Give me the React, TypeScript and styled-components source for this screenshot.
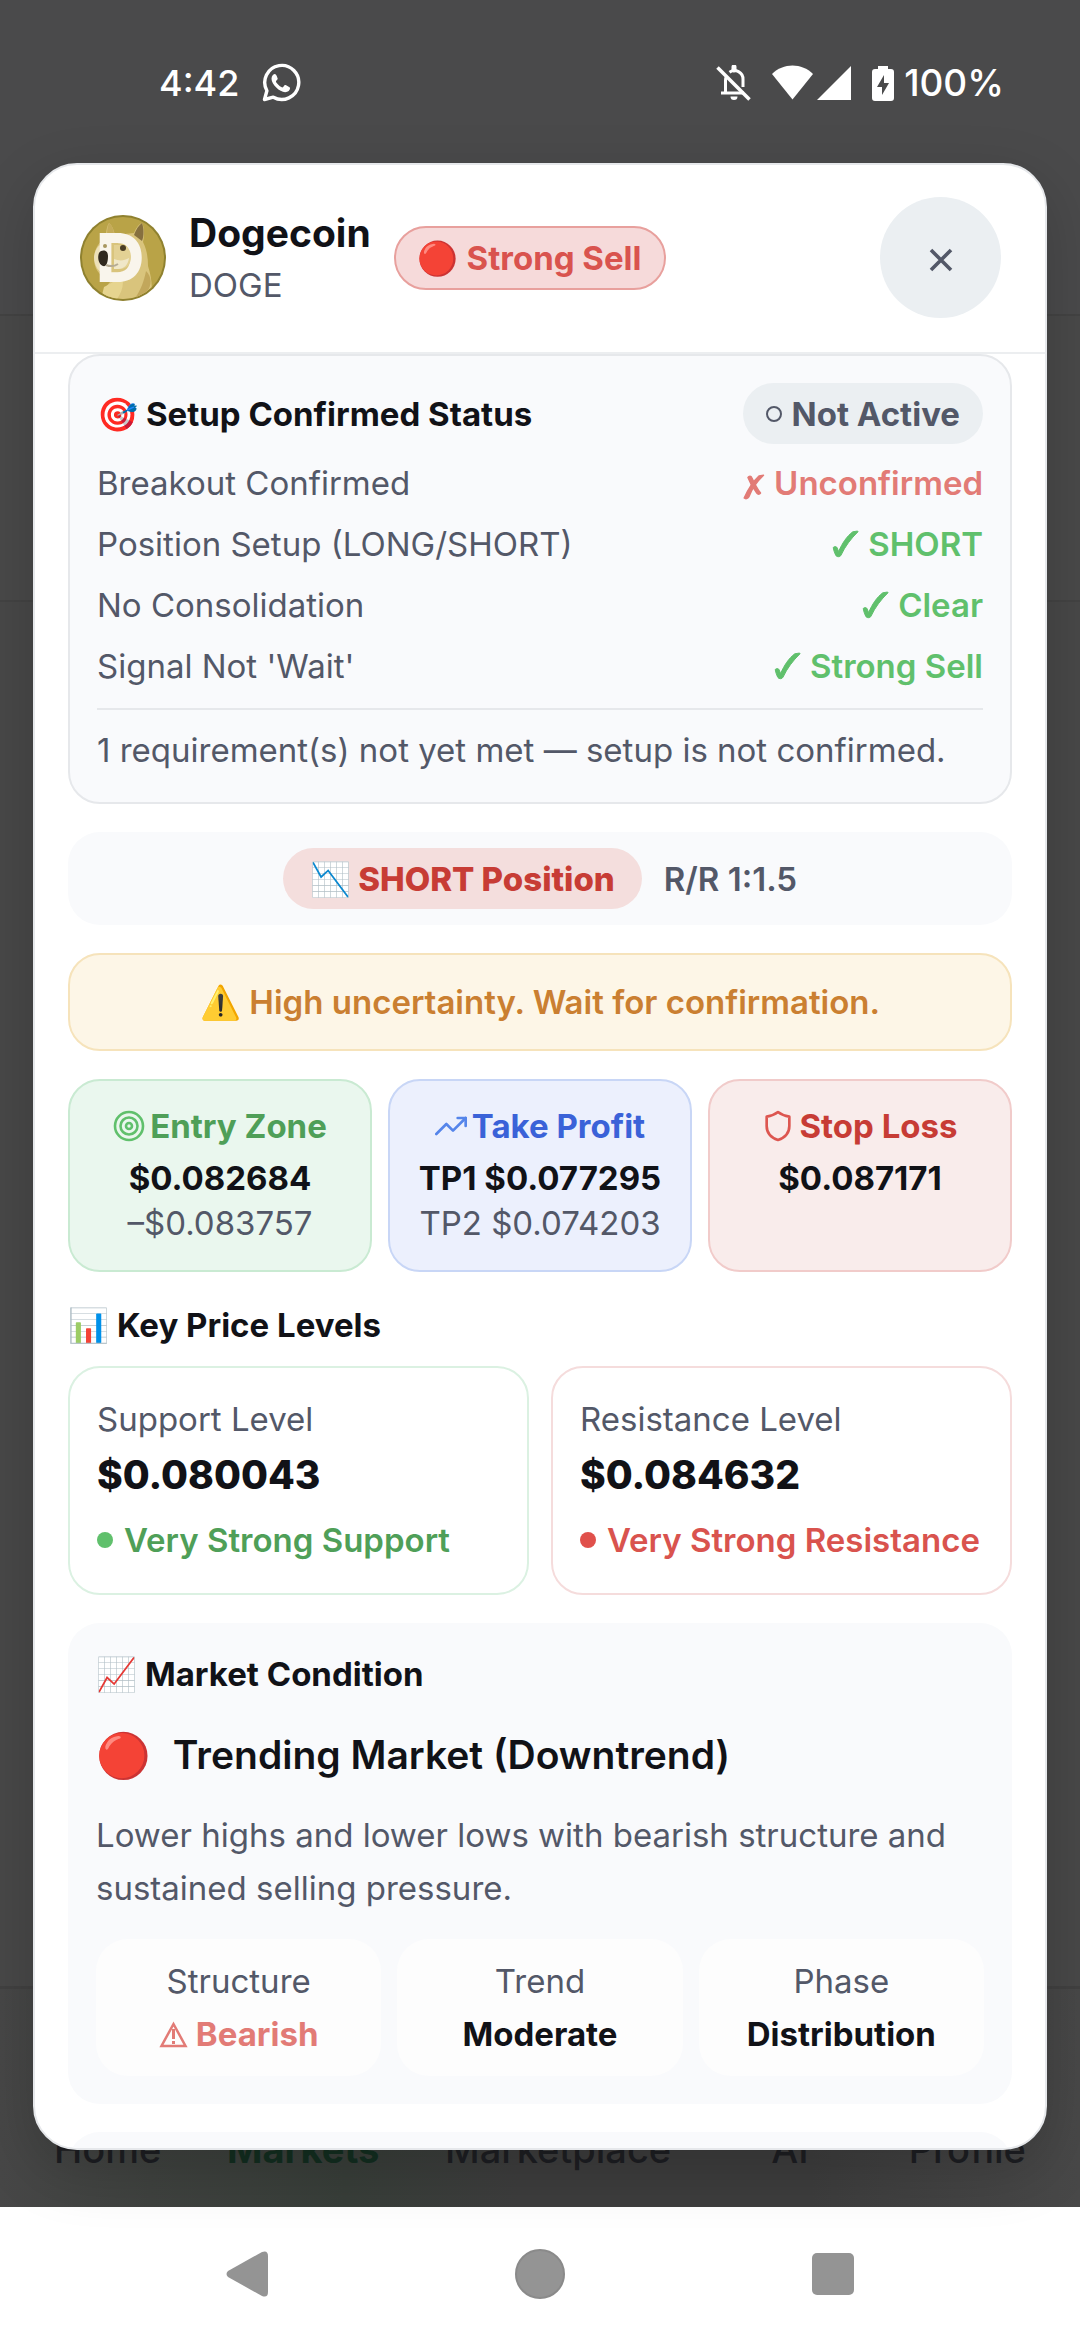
import React from 'react';
import styled, { createGlobalStyle } from 'styled-components';

const color = {
  ink: '#111217',
  body: '#535868',
  line: '#e6e8eb',
  panel: '#f9fafc',
  chip: '#ebeff2',
  green: '#4f9f58',
  greenBright: '#60c06c',
  red: '#c73c35',
  redMid: '#d9534e',
  redSoft: '#e27b76',
  blue: '#3a62d8',
  amber: '#ca7f31',
};

const GlobalStyle = createGlobalStyle`
  *, *::before, *::after { box-sizing: border-box; }
  body {
    margin: 0;
    font-family: Inter, "Noto Color Emoji", Roboto, sans-serif;
    font-size: 33px;
    line-height: 50px;
    color: ${color.ink};
    background: #494949;
  }
  h1, h2, h3, p, ul, dl, dd, dt { margin: 0; padding: 0; font-weight: inherit; font-size: inherit; }
  button { font: inherit; border: 0; padding: 0; background: none; cursor: pointer; }
`;

const Screen = styled.div`
  display: flex;
  flex-direction: column;
  height: 100vh;
`;

const AppArea = styled.div`
  position: relative;
  flex: 1;
  min-height: 0;
  display: flex;
  flex-direction: column;
  background: linear-gradient(#4a4a4b 0 314px, #434343 314px 316px, #494949 316px 600px, #434343 600px 602px, #484848 602px);
`;

const StatusBar = styled.div`
  display: flex;
  align-items: center;
  justify-content: space-between;
  height: 163px;
  padding: 3px 76px 0 159px;
  color: #fff;
  font-size: 36px;
  font-weight: 500;
`;

const StatusGroup = styled.div<{ $gap: number }>`
  display: flex;
  align-items: center;
  gap: ${(p) => p.$gap}px;
  svg { display: block; }
`;

const BatteryLevel = styled.span`
  font-size: 37px;
`;

const TabBar = styled.nav`
  position: absolute;
  left: 0;
  right: 0;
  bottom: 0;
  height: 221px;
  padding: 0 54px 33px;
  display: flex;
  align-items: flex-end;
  justify-content: space-between;
  border-top: 3px solid #414141;
  background: linear-gradient(90deg, #474747 0%, #3f423f 14%, #383e39 32%, #3d3d3d 48%, #3d3d3d 75%, #484848 100%);
`;

const Tab = styled.a<{ $active?: boolean }>`
  min-width: 106px;
  text-align: center;
  text-decoration: none;
  font-size: 38px;
  line-height: 50px;
  font-weight: ${(p) => (p.$active ? 700 : 500)};
  color: ${(p) => (p.$active ? '#132e20' : '#1d1e22')};
`;

const DialogHolder = styled.div`
  position: relative;
  flex: 1;
  min-height: 0;
  display: flex;
  padding: 0 33px 57px;
`;

const Dialog = styled.section`
  flex: 1;
  min-width: 0;
  display: flex;
  flex-direction: column;
  overflow: hidden;
  border: 2px solid ${color.line};
  border-radius: 44px;
  background: #fff;
  box-shadow: 0 20px 60px rgba(0, 0, 0, 0.18);
`;

const DialogHeader = styled.header`
  display: flex;
  align-items: center;
  gap: 23px;
  padding: 32px 44px 34px 45px;
  border-bottom: 2px solid #eceef0;
`;

const CoinName = styled.h1`
  font-size: 39px;
  line-height: 54px;
  font-weight: 700;
`;

const CoinSymbol = styled.p`
  color: ${color.body};
`;

const SignalBadge = styled.span`
  padding: 5px 22px;
  border: 2px solid #e8a09d;
  border-radius: 32px;
  background: #f6dada;
  color: ${color.redMid};
  font-weight: 700;
  white-space: nowrap;
`;

const CloseButton = styled.button`
  display: flex;
  align-items: center;
  justify-content: center;
  width: 121px;
  height: 121px;
  margin-left: auto;
  padding-top: 5px;
  border-radius: 50%;
  background: ${color.chip};
`;

const DialogBody = styled.div`
  flex: 1;
  min-height: 0;
  overflow: hidden;
  padding: 0 33px;
  display: flex;
  flex-direction: column;
  gap: 28px;
  > * { flex-shrink: 0; }
`;

const SetupCard = styled.section`
  padding: 27px;
  border: 2px solid ${color.line};
  border-radius: 32px;
  background: ${color.panel};
`;

const SetupHead = styled.div`
  display: flex;
  align-items: center;
  justify-content: space-between;
  margin-bottom: 14px;
`;

const Heading = styled.h2`
  font-weight: 700;
`;

const Pill = styled.span<{ $tone: 'neutral' | 'short' }>`
  display: inline-flex;
  align-items: center;
  gap: 10px;
  height: 61px;
  padding: 0 ${(p) => (p.$tone === 'short' ? 27 : 23)}px;
  border-radius: 31px;
  font-weight: ${(p) => (p.$tone === 'short' ? 800 : 700)};
  color: ${(p) => (p.$tone === 'short' ? color.red : color.body)};
  background: ${(p) => (p.$tone === 'short' ? '#f4dedd' : color.chip)};
`;

const Ring = styled.span`
  width: 16px;
  height: 16px;
  border: 2px solid ${color.body};
  border-radius: 50%;
`;

const CheckList = styled.dl`
  display: flex;
  flex-direction: column;
  gap: 11px;
`;

const CheckRow = styled.div`
  display: flex;
  justify-content: space-between;
`;

const CheckLabel = styled.dt`
  color: ${color.body};
`;

const CheckValue = styled.dd<{ $ok: boolean }>`
  display: flex;
  align-items: center;
  gap: 9px;
  font-weight: 600;
  color: ${(p) => (p.$ok ? color.greenBright : color.redSoft)};
`;

const SetupNote = styled.p`
  margin-top: 17px;
  padding-top: 15px;
  border-top: 2px solid ${color.line};
  color: ${color.body};
`;

const PositionBar = styled.section`
  display: flex;
  align-items: center;
  justify-content: center;
  gap: 22px;
  padding: 16px;
  border-radius: 32px;
  background: ${color.panel};
`;

const RiskReward = styled.span`
  font-weight: 600;
  color: ${color.body};
`;

const Warning = styled.p`
  padding: 22px;
  border: 2px solid #f6e3bb;
  border-radius: 32px;
  background: #fdf6e7;
  color: ${color.amber};
  font-weight: 600;
  text-align: center;
`;

const ThreeColumns = styled.div`
  display: grid;
  grid-template-columns: repeat(3, 1fr);
  gap: 16px;
`;

const TargetCard = styled.section<{ $bg: string; $edge: string }>`
  padding: 20px 8px 24px;
  border: 2px solid ${(p) => p.$edge};
  border-radius: 32px;
  background: ${(p) => p.$bg};
  text-align: center;
`;

const TargetTitle = styled.h3<{ $color: string }>`
  display: flex;
  align-items: center;
  justify-content: center;
  gap: 5px;
  margin-bottom: 5px;
  font-weight: 700;
  color: ${(p) => p.$color};
`;

const TargetLine = styled.p<{ $soft?: boolean }>`
  line-height: 45px;
  font-weight: ${(p) => (p.$soft ? 400 : 700)};
  color: ${(p) => (p.$soft ? color.body : color.ink)};
`;

const LevelsSection = styled.section`
  display: flex;
  flex-direction: column;
  gap: 16px;
`;

const LevelGrid = styled.div`
  display: grid;
  grid-template-columns: repeat(2, 1fr);
  gap: 22px;
`;

const LevelCard = styled.article<{ $edge: string }>`
  padding: 26px 27px 28px;
  border: 2px solid ${(p) => p.$edge};
  border-radius: 32px;
`;

const LevelLabel = styled.h3`
  color: ${color.body};
`;

const LevelPrice = styled.p`
  margin: 6px 0 15px;
  font-size: 39px;
  font-weight: 800;
`;

const LevelStrength = styled.p<{ $color: string; $dot: string }>`
  display: flex;
  align-items: center;
  gap: 11px;
  font-weight: 600;
  white-space: nowrap;
  color: ${(p) => p.$color};
  &::before {
    content: '';
    width: 16px;
    height: 16px;
    border-radius: 50%;
    background: ${(p) => p.$dot};
  }
`;

const MarketCard = styled.section`
  padding: 26px 28px 28px;
  border-radius: 32px;
  background: ${color.panel};
`;

const MarketState = styled.h3`
  display: flex;
  align-items: center;
  gap: 22px;
  margin: 31px 0 29px;
  font-size: 39px;
  font-weight: 600;
`;

const StateEmoji = styled.span`
  font-size: 44px;
`;

const MarketText = styled.p`
  margin-bottom: 24px;
  line-height: 53px;
  color: ${color.body};
`;

const FactTile = styled.div`
  padding: 17px;
  border-radius: 32px;
  background: #fdfdfd;
  text-align: center;
`;

const FactLabel = styled.p`
  margin-bottom: 3px;
  color: ${color.body};
`;

const FactValue = styled.p<{ $alert?: boolean }>`
  display: flex;
  align-items: center;
  justify-content: center;
  gap: 8px;
  font-weight: 700;
  color: ${(p) => (p.$alert ? color.redSoft : color.ink)};
`;

const NextCard = styled.section`
  height: 120px;
  border-radius: 32px;
  background: ${color.panel};
`;

const SystemNav = styled.nav`
  display: flex;
  justify-content: space-around;
  align-items: center;
  height: 133px;
  padding: 0 100px;
  background: #fff;
`;

const SystemButton = styled.button`
  display: flex;
  align-items: center;
  justify-content: center;
  width: 96px;
  height: 96px;
`;

const DogeLogo = () => (
  <svg width="86" height="86" viewBox="0 0 86 86" role="img" aria-label="Dogecoin logo">
    <defs>
      <clipPath id="coin"><circle cx="43" cy="43" r="41" /></clipPath>
    </defs>
    <circle cx="43" cy="43" r="43" fill="#8f812f" />
    <circle cx="43" cy="43" r="41" fill="#b9a347" />
    <g clipPath="url(#coin)">
      <path d="M29 8c3 2 5 8 6 12l19-2c2-5 5-9 8-10 3 6 2 14 1 19 4 8 5 16 5 24 4 12 5 24 2 36H22c0-9 3-15 10-22-10-2-17-8-18-20 0-10 4-17 12-24 0-5 1-10 3-13z" fill="#d9c47c" />
      <path d="M54 20c2-6 5-10 8-12 2 6 2 13 0 18z" fill="#86703f" />
      <path d="M29 8c3 2 5 7 5 12l-7 2c0-5 0-10 2-14z" fill="#c4ab59" />
      <path d="M14 42c1-9 6-14 12-14v32c-7-2-12-9-12-18z" fill="#ece0b8" />
      <path d="M24 72c8-4 14-8 18-10 3 9-2 19-8 26H20z" fill="#e6d48f" />
      <path d="M66 56c6 6 6 14 1 21l-12 6c6-8 9-17 11-27z" fill="#c2a75b" />
    </g>
    <text x="16" y="67" fontFamily="Inter, sans-serif" fontSize="67" fontWeight="800" fill="#f9f5ec">D</text>
    <path d="M34 30h6c7 0 11 5 11 12s-4 12-11 12h-6z" fill="#e3d194" />
    <path d="M34 44c5 2 10 2 15-1-1 7-5 11-11 11h-4z" fill="#f0e7c8" />
    <path d="M19 38c3-4 9-3 9 3 0 7-2 11-5 10-4-1-6-8-4-13z" fill="#30291f" />
    <path d="M26 50c5 2 9 1 12-1" stroke="#b5ab94" strokeWidth="2" fill="none" />
    <ellipse cx="43" cy="33" rx="3" ry="3" fill="#4a3d25" />
    <ellipse cx="25" cy="31" rx="2" ry="2" fill="#a8975f" />
  </svg>
);

const WhatsAppIcon = () => (
  <svg width="40" height="40" viewBox="0 0 40 40" fill="none" aria-label="WhatsApp">
    <path d="M3.500 36.500l2.400-8.800A17 17 0 1 1 12.300 34.200z" stroke="#fff" strokeWidth="3.400" strokeLinejoin="round" />
    <path d="M14 11c-1.500 0-3.500 2-3.500 4.800 0 5.700 8.200 13.400 13.600 13.400 3 0 5-2 5-4.200 0-.7-4.300-2.900-5-2.900-.8 0-1.800 2.300-2.600 2.300-1.500 0-6-3.800-6.600-6 0-.8 1.800-1.600 1.800-2.700 0-.7-1.600-4.700-2.700-4.700z" fill="#fff" />
  </svg>
);

const BellOffIcon = () => (
  <svg width="36" height="36" viewBox="0 0 36 36" fill="none" stroke="#fff" strokeWidth="3" aria-label="Notifications silenced">
    <path d="M5 28h23M9.500 28V15.500c0-1.800.5-3.500 1.300-4.800M13.500 7.300A8.500 8.500 0 0 1 27 14.500V22" />
    <path d="M18 5V2" strokeWidth="5" strokeLinecap="round" />
    <path d="M14.500 31.500h7a3.500 3.500 0 0 1-7 0z" fill="#fff" stroke="none" />
    <path d="M1.500 2.500l32 32" strokeWidth="3.500" />
  </svg>
);

const SignalIcons = () => (
  <svg width="80" height="36" viewBox="0 0 80 36" fill="#fff" aria-label="Wi-Fi and mobile signal">
    <path d="M0 9C11-2.500 30-2.500 41 9L20.500 34.500z" />
    <path d="M79 1v34H45z" />
  </svg>
);

const BatteryIcon = () => (
  <svg width="22" height="36" viewBox="0 0 22 36" aria-label="Charging">
    <path d="M6 1h10v3h3a3 3 0 0 1 3 3v26a3 3 0 0 1-3 3H3a3 3 0 0 1-3-3V7a3 3 0 0 1 3-3h3z" fill="#fff" />
    <path d="M12 10L5 22h5v8l7-12h-5z" fill="#4a4a4b" />
  </svg>
);

const CloseIcon = () => (
  <svg width="24" height="24" viewBox="0 0 24 24" stroke={color.body} strokeWidth="3.600" aria-hidden="true">
    <path d="M2 2l20 20M22 2L2 22" />
  </svg>
);

const CheckMark = () => (
  <svg width="27" height="28" viewBox="0 0 27 28" aria-hidden="true">
    <path d="M1.200 17.500c1.500-1.500 3.500-1 4.100.6l1.300 3.600C10 13.500 15 6 20.800 1.800l4.800-.8.4.8C19 8.500 13 16.500 9 25.200 8 27.200 4.800 27.200 3.700 25.200 2.400 22.500 1.600 20 1.200 17.500z" fill={color.greenBright} stroke={color.greenBright} strokeWidth="1" strokeLinejoin="round" />
  </svg>
);

const CrossMark = () => (
  <svg width="22" height="34" viewBox="0 -7 22 34" fill={color.redSoft} stroke={color.redSoft} strokeWidth="1.500" strokeLinejoin="round" aria-hidden="true">
    <path d="M16 3l4.500-.7C13.500 9 9 15.500 6 23.500 4.500 26 2.500 26 1.200 25 5 16.500 9.500 9 16 3z" />
    <path d="M5 4.500c1-1.500 3-1.700 3.700 0C11 9.500 13.500 15 17.500 20c-1 1.500-2.700 1.500-3.700 0C10 15 7 10 5 4.500z" />
  </svg>
);

const TargetIcon = () => (
  <svg width="32" height="32" viewBox="0 0 32 32" fill="none" stroke={color.greenBright} strokeWidth="2.600" aria-hidden="true">
    <circle cx="16" cy="16" r="14" />
    <circle cx="16" cy="16" r="8.500" />
    <circle cx="16" cy="16" r="3" />
  </svg>
);

const TrendIcon = () => (
  <svg width="32" height="32" viewBox="0 0 24 24" fill="none" stroke="#5585ea" strokeWidth="2" strokeLinecap="round" strokeLinejoin="round" aria-hidden="true">
    <path d="M23 6l-9.500 9.500-5-5L1 18" />
    <path d="M17 6h6v6" />
  </svg>
);

const ShieldIcon = () => (
  <svg width="32" height="32" viewBox="0 0 24 24" fill="none" stroke="#dd5650" strokeWidth="2" strokeLinejoin="round" aria-hidden="true">
    <path d="M12 1.500c2.500 2 5.500 3 8.500 3.500v7c0 5.500-4 9-8.500 10.500C7.500 21 3.500 17.500 3.500 12V5C6.500 4.500 9.500 3.500 12 1.500z" />
  </svg>
);

const AlertIcon = () => (
  <svg width="29" height="27" viewBox="0 0 29 27" fill="none" stroke={color.redSoft} strokeWidth="2.500" aria-hidden="true">
    <path d="M14.500 3L26.500 25H2.500z" />
    <path d="M14.500 8v10M14.500 20v3" strokeWidth="3" />
  </svg>
);

const checks = [
  { label: 'Breakout Confirmed', value: 'Unconfirmed', ok: false },
  { label: 'Position Setup (LONG/SHORT)', value: 'SHORT', ok: true },
  { label: 'No Consolidation', value: 'Clear', ok: true },
  { label: "Signal Not 'Wait'", value: 'Strong Sell', ok: true },
];

const tabs = ['Home', 'Markets', 'Marketplace', 'AI', 'Profile'];

export default function App() {
  return (
    <>
      <GlobalStyle />
      <Screen>
        <AppArea>
          <TabBar aria-label="Main">
            {tabs.map((tab) => (
              <Tab key={tab} href={`#${tab.toLowerCase()}`} $active={tab === 'Markets'}>{tab}</Tab>
            ))}
          </TabBar>
          <StatusBar>
            <StatusGroup $gap={22}>
              <span>4:42</span>
              <WhatsAppIcon />
            </StatusGroup>
            <StatusGroup $gap={20}>
              <BellOffIcon />
              <SignalIcons />
              <StatusGroup $gap={10}>
                <BatteryIcon />
                <BatteryLevel>100%</BatteryLevel>
              </StatusGroup>
            </StatusGroup>
          </StatusBar>
          <DialogHolder>
            <Dialog role="dialog" aria-label="Dogecoin signal details">
              <DialogHeader>
                <DogeLogo />
                <div>
                  <CoinName>Dogecoin</CoinName>
                  <CoinSymbol>DOGE</CoinSymbol>
                </div>
                <SignalBadge>🔴 Strong Sell</SignalBadge>
                <CloseButton type="button" aria-label="Close"><CloseIcon /></CloseButton>
              </DialogHeader>
              <DialogBody>
                <SetupCard>
                  <SetupHead>
                    <Heading>🎯 Setup Confirmed Status</Heading>
                    <Pill $tone="neutral"><Ring />Not Active</Pill>
                  </SetupHead>
                  <CheckList>
                    {checks.map((c) => (
                      <CheckRow key={c.label}>
                        <CheckLabel>{c.label}</CheckLabel>
                        <CheckValue $ok={c.ok}>
                          {c.ok ? <CheckMark /> : <CrossMark />}
                          {c.value}
                        </CheckValue>
                      </CheckRow>
                    ))}
                  </CheckList>
                  <SetupNote>1 requirement(s) not yet met — setup is not confirmed.</SetupNote>
                </SetupCard>

                <PositionBar>
                  <Pill $tone="short">📉 SHORT Position</Pill>
                  <RiskReward>R/R 1:1.5</RiskReward>
                </PositionBar>

                <Warning>⚠️ High uncertainty. Wait for confirmation.</Warning>

                <ThreeColumns>
                  <TargetCard $bg="#eaf7ee" $edge="#c9ead2">
                    <TargetTitle $color={color.green}><TargetIcon />Entry Zone</TargetTitle>
                    <TargetLine>$0.082684</TargetLine>
                    <TargetLine $soft>–$0.083757</TargetLine>
                  </TargetCard>
                  <TargetCard $bg="#ecf0fd" $edge="#c8d6f6">
                    <TargetTitle $color={color.blue}><TrendIcon />Take Profit</TargetTitle>
                    <TargetLine>TP1 $0.077295</TargetLine>
                    <TargetLine $soft>TP2 $0.074203</TargetLine>
                  </TargetCard>
                  <TargetCard $bg="#f9eceb" $edge="#f1cbca">
                    <TargetTitle $color={color.red}><ShieldIcon />Stop Loss</TargetTitle>
                    <TargetLine>$0.087171</TargetLine>
                  </TargetCard>
                </ThreeColumns>

                <LevelsSection>
                  <Heading>📊 Key Price Levels</Heading>
                  <LevelGrid>
                    <LevelCard $edge="#dbf1e2">
                      <LevelLabel>Support Level</LevelLabel>
                      <LevelPrice>$0.080043</LevelPrice>
                      <LevelStrength $color={color.green} $dot={color.greenBright}>Very Strong Support</LevelStrength>
                    </LevelCard>
                    <LevelCard $edge="#f5dcdc">
                      <LevelLabel>Resistance Level</LevelLabel>
                      <LevelPrice>$0.084632</LevelPrice>
                      <LevelStrength $color={color.redMid} $dot="#e0504b">Very Strong Resistance</LevelStrength>
                    </LevelCard>
                  </LevelGrid>
                </LevelsSection>

                <MarketCard>
                  <Heading>📈 Market Condition</Heading>
                  <MarketState><StateEmoji>🔴</StateEmoji>Trending Market (Downtrend)</MarketState>
                  <MarketText>Lower highs and lower lows with bearish structure and sustained selling pressure.</MarketText>
                  <ThreeColumns>
                    <FactTile>
                      <FactLabel>Structure</FactLabel>
                      <FactValue $alert><AlertIcon />Bearish</FactValue>
                    </FactTile>
                    <FactTile>
                      <FactLabel>Trend</FactLabel>
                      <FactValue>Moderate</FactValue>
                    </FactTile>
                    <FactTile>
                      <FactLabel>Phase</FactLabel>
                      <FactValue>Distribution</FactValue>
                    </FactTile>
                  </ThreeColumns>
                </MarketCard>

                <NextCard />
              </DialogBody>
            </Dialog>
          </DialogHolder>
        </AppArea>
        <SystemNav aria-label="System">
          <SystemButton type="button" aria-label="Back">
            <svg width="44" height="50" viewBox="0 0 44 50"><path d="M37 3L3 22q-3 3 0 6l34 19q6 2 6-4V7q0-6-6-4z" fill="#949494" /></svg>
          </SystemButton>
          <SystemButton type="button" aria-label="Home">
            <svg width="50" height="50" viewBox="0 0 50 50"><circle cx="25" cy="25" r="24" fill="#949494" stroke="#8a8a8a" strokeWidth="2" /></svg>
          </SystemButton>
          <SystemButton type="button" aria-label="Recent apps">
            <svg width="42" height="42" viewBox="0 0 42 42"><rect width="42" height="42" rx="5" fill="#949494" /></svg>
          </SystemButton>
        </SystemNav>
      </Screen>
    </>
  );
}
